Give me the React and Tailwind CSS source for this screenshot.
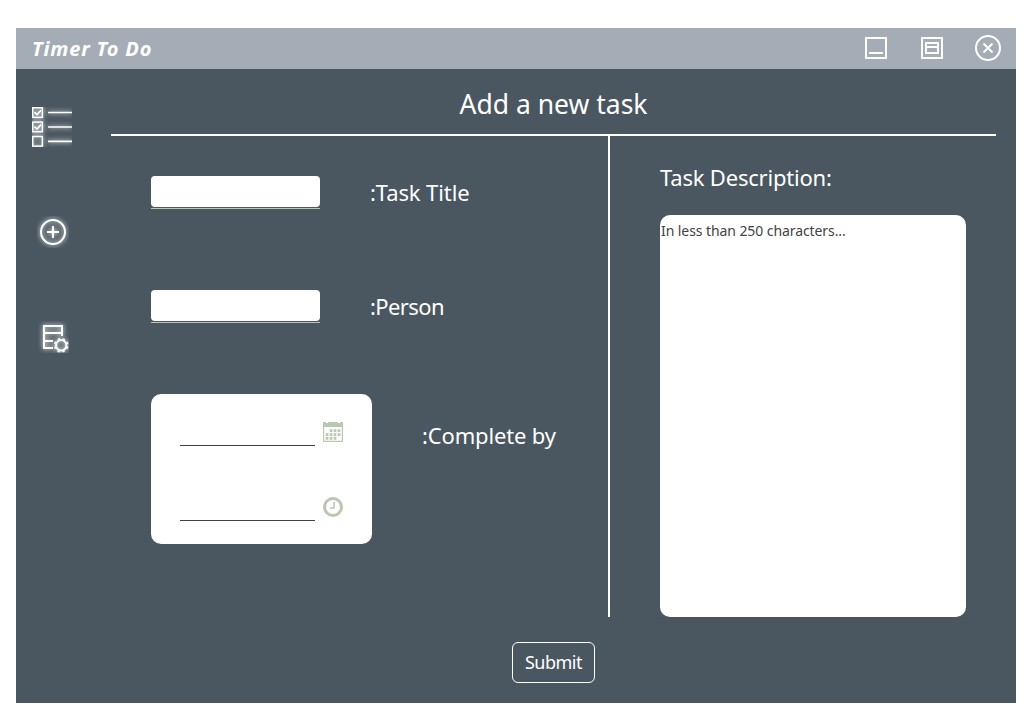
import React from "react";

function Glow({ id }) {
  return (
    <filter id={id} x="-50%" y="-50%" width="200%" height="200%">
      <feGaussianBlur in="SourceGraphic" stdDeviation="2.6" result="b" />
      <feComponentTransfer in="b" result="c">
        <feFuncA type="linear" slope="1" />
      </feComponentTransfer>
      <feMerge>
        <feMergeNode in="c" />
        <feMergeNode in="SourceGraphic" />
      </feMerge>
    </filter>
  );
}

function ListIcon() {
  return (
    <svg width="40" height="40" viewBox="0 0 40 40" fill="none" stroke="#fff" className="block overflow-hidden">
      <defs><Glow id="glow-list" /></defs>
      <g filter="url(#glow-list)" strokeWidth="1.5">
        <rect x="0.75" y="0.75" width="9.6" height="9.6" />
        <rect x="0.75" y="15.1" width="9.6" height="9.6" />
        <rect x="0.75" y="29.5" width="9.6" height="9.6" />
        <path d="M2.4 5.2l2.6 2.4 4-4.400M2.4 19.6l2.6 2.400 4-4.400" strokeWidth="1.6" />
        <path d="M16 5.5h24M16 20h24M16 34.400h24" strokeWidth="1.7" />
      </g>
    </svg>
  );
}

function AddIcon() {
  return (
    <svg width="32" height="32" viewBox="0 0 32 32" fill="none" stroke="#fff" strokeWidth="2" className="block overflow-hidden">
      <defs><Glow id="glow-add" /></defs>
      <g filter="url(#glow-add)">
        <circle cx="16" cy="16" r="12" />
        <path d="M10 16h12M16 10v12" />
      </g>
    </svg>
  );
}

function SettingsIcon() {
  return (
    <svg width="32" height="32" viewBox="0 0 32 32" fill="none" stroke="#fff" strokeWidth="2" className="block overflow-hidden">
      <defs><Glow id="glow-set" /></defs>
      <g filter="url(#glow-set)">
        <path d="M16 27H7V5h18v10M7 12h18M7 20h9" />
        <circle cx="24.200" cy="24.300" r="5.200" strokeWidth="2" />
        <circle cx="24.200" cy="24.300" r="6.600" strokeWidth="1.500" strokeDasharray="2.400 2.784" strokeDashoffset="-1.400" />
      </g>
    </svg>
  );
}

function MinimizeIcon() {
  return (
    <svg width="22" height="22" viewBox="0 0 22 22" fill="none" stroke="#fff" strokeWidth="2" className="block">
      <path d="M1 1h20v20H1zM4 16h14" />
    </svg>
  );
}

function RestoreIcon() {
  return (
    <svg width="22" height="22" viewBox="0 0 22 22" fill="none" stroke="#fff" strokeWidth="2" className="block">
      <path d="M1 1h20v20H1zM5 6h12v10H5zM5 10h12" />
    </svg>
  );
}

function CloseIcon() {
  return (
    <svg width="26" height="26" viewBox="0 0 26 26" fill="none" stroke="#fff" strokeWidth="2" className="block">
      <circle cx="13" cy="13" r="12" />
      <path d="M8.500 8.500l9 9M17.500 8.500l-9 9" />
    </svg>
  );
}

function CalendarIcon() {
  return (
    <svg width="20" height="20" viewBox="0 0 20 20" fill="#b8c8ae" className="block">
      <path fillRule="evenodd" d="M0 0H2.700V.6Q4 1.900 5.300.6V0H14.700V.6Q16 1.900 17.300.6V0H20V20H0ZM1.200 5V18.800H18.800V5Z" />
      <path d="M6.700 7.300h2.700v2.700H6.700zM10.700 7.300h2.700v2.700h-2.700zM14.700 7.300h2.700v2.700h-2.700zM2.700 11.200h2.700v2.700H2.700zM6.700 11.200h2.700v2.700H6.700zM10.700 11.200h2.700v2.700h-2.700zM14.700 11.200h2.700v2.700h-2.700zM2.700 15h2.700v2.700H2.700zM6.700 15h2.700v2.700H6.700zM10.700 15h2.700v2.700h-2.700z" />
    </svg>
  );
}

function ClockIcon() {
  return (
    <svg width="20" height="20" viewBox="0 0 20 20" fill="none" stroke="#b8c8ae" className="block">
      <circle cx="10" cy="10" r="8.500" strokeWidth="3" />
      <path d="M11 5v6H7" strokeWidth="1.500" />
    </svg>
  );
}

function TextField({ label, tracking }) {
  return (
    <label className="flex h-[33px] items-start">
      <span className="flex h-[33px] w-[169px] flex-col justify-between border-b border-[#b8c8ae]">
        <input className="h-[31px] w-full rounded-[4px] bg-white outline-none" />
      </span>
      <span className={`ml-[50px] whitespace-nowrap text-[22px] leading-[32px] ${tracking}`}>{label}</span>
    </label>
  );
}

function PickerRow({ children }) {
  return (
    <div className="flex h-6 items-start gap-2">
      <input className="h-6 w-[135px] border-b border-[#424242] bg-transparent outline-none" />
      {children}
    </div>
  );
}

export default function App() {
  return (
    <div className="h-[725px] w-[1028px] bg-white pl-4 pt-7 font-['Segoe_UI','Noto_Sans',sans-serif] text-white">
      <div className="flex h-[675px] w-[1000px] flex-col bg-[#4a5761]">
        <header className="flex h-[41px] shrink-0 items-center justify-between bg-[#a4acb6] pl-4 pr-[15px]">
          <h1 className="text-[20px] font-bold italic leading-[41px] tracking-[0.85px]">Timer To Do</h1>
          <div className="flex items-center pb-[2px]">
            <button className="mr-[34px]"><MinimizeIcon /></button>
            <button className="mr-8"><RestoreIcon /></button>
            <button><CloseIcon /></button>
          </div>
        </header>
        <div className="flex min-h-0 flex-1">
          <nav className="flex w-[95px] shrink-0 flex-col pl-4 pt-[38px]">
            <button className="w-10"><ListIcon /></button>
            <button className="ml-[5px] mt-[69px] w-8"><AddIcon /></button>
            <button className="ml-[5px] mt-[73px] w-8"><SettingsIcon /></button>
          </nav>
          <main className="flex w-[885px] flex-col">
            <h2 className="h-[67px] shrink-0 border-b-2 border-white text-center text-[26.5px] leading-[70px]">Add a new task</h2>
            <div className="flex h-[483px] shrink-0">
              <section className="flex h-[481px] w-[499px] flex-col border-r-2 border-white pl-10 pt-10">
                <TextField label=":Task Title" tracking="tracking-[-0.1px]" />
                <div className="mt-[81px]"><TextField label=":Person" tracking="tracking-[-0.6px]" /></div>
                <div className="mt-[71px] flex">
                  <div className="h-[150px] w-[221px] rounded-[10px] bg-white pl-[29px] pt-7">
                    <PickerRow><CalendarIcon /></PickerRow>
                    <div className="h-[51px]" />
                    <PickerRow><ClockIcon /></PickerRow>
                  </div>
                  <span className="ml-[50px] mt-[24px] whitespace-nowrap text-[22px] leading-[34px] tracking-[-0.15px]">:Complete by</span>
                </div>
              </section>
              <section className="flex flex-1 flex-col pl-[50px] pt-[25px]">
                <label htmlFor="description" className="h-[54px] whitespace-nowrap text-[22px] leading-[32px] tracking-[-0.2px]">Task Description:</label>
                <div className="h-[404px] w-[306px] border-b border-[#505050]">
                  <textarea
                    id="description"
                    placeholder="In less than 250 characters..."
                    className="block h-[402px] w-[306px] resize-none rounded-[10px] bg-white pl-px pt-[6px] text-[14px] leading-5 tracking-[-0.08px] outline-none placeholder:text-[#424242]"
                  />
                </div>
              </section>
            </div>
            <button className="mt-[23px] h-[41px] w-[83px] shrink-0 self-center rounded-[6px] border border-white text-[18px] leading-[39px] tracking-[-0.5px]">Submit</button>
          </main>
        </div>
      </div>
    </div>
  );
}
